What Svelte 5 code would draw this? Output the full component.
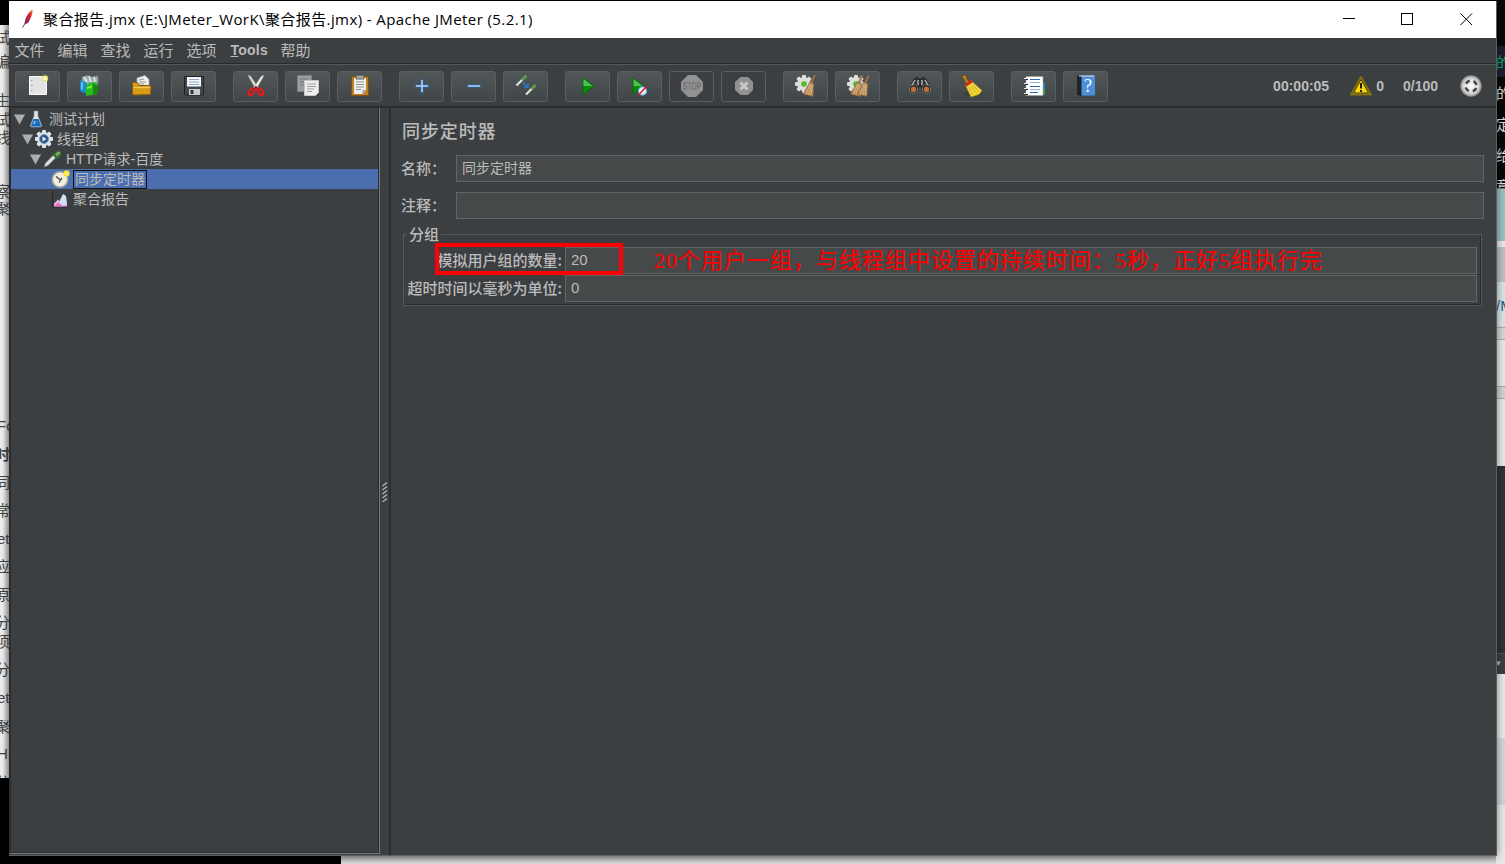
<script>
  const menus = ['文件', '编辑', '查找', '运行', '选项', 'Tools', '帮助'];
  const groups = [
    ['new', 'templates', 'open', 'save'],
    ['cut', 'copy', 'paste'],
    ['plus', 'minus', 'toggle'],
    ['start', 'startnp', 'stop', 'shutdown'],
    ['clear', 'clearall'],
    ['find', 'broom'],
    ['func', 'help']
  ];
  const tree = [
    { label: '测试计划', icon: 'flask', pad: 3, open: true },
    { label: '线程组', icon: 'gear', pad: 11, open: true },
    { label: 'HTTP请求-百度', icon: 'pipette', pad: 19, open: true },
    { label: '同步定时器', icon: 'clock', pad: 40, sel: true },
    { label: '聚合报告', icon: 'chart', pad: 40 }
  ];
  const leftText = [
    [29, '试'], [53, '编'], [92, '生'], [111, '试'], [129, '线'], [183, '察'], [200, '聚'],
    [417, 'Fo'], [446, '时', 1], [474, '同'], [502, '常'], [530, 'et'], [558, '应'], [586, '原'], [614, '分'],
    [633, '项'], [661, '分'], [689, 'et'], [718, '聚'], [745, 'HI'], [774, '分']
  ].map((r, i, a) => ({ gap: r[0] - (i ? a[i - 1][0] + 18 : 25), text: r[1], bold: r[2] }));
  const rightText = [['的', 1], ['的'], ['定'], ['给'], ['意']];
  const gearTeeth = [0, 45, 90, 135, 180, 225, 270, 315];
</script>

{#snippet gear(c)}
  {#each gearTeeth as a}
    <rect x="-2" y="-9" width="4" height="5" rx="1" fill={c} transform="rotate({a})" />
  {/each}
  <circle r="6.900" fill={c} />
{/snippet}

{#snippet whisk(x)}
  <g transform="translate({x} 0)">
    <path d="M18.500 1l1.500.6-3.500 8-1.500-.6z" fill="#b98c56" stroke="#6f4d28" stroke-width=".5" />
    <path d="M14.500 8l4 1.500-1 13-10-2.500z" fill="#b88c5c" stroke="#7d5a34" stroke-width=".6" />
    <path d="M14.500 10l-4 10.500M15.700 10.500l-2.500 10.500M17 11l-1.500 10" stroke="#e0bb8c" stroke-width=".8" fill="none" />
  </g>
{/snippet}

{#snippet icon(n)}
  <svg class="ic" viewBox="0 0 24 24" width="24" height="24">
    {#if n === 'new'}
      <path d="M3.500 2.500h17v18h-17z" fill="#e3e3e3" stroke="#fafafa" />
      <path d="M5 6.500h1.500M5 11.500h1.500M5 16.500h1.500" stroke="#999" />
      <circle cx="19" cy="4.500" r="3.200" fill="#efe570" opacity=".9" /><circle cx="19" cy="4.500" r="1.500" fill="#fffde0" />
    {:else if n === 'templates'}
      <path d="M4 3l5-1.500 5 1.500 6-1v8l-8 3-8-3z" fill="#9caeb5" stroke="#748186" stroke-width=".7" />
      <path d="M6 3l3 5M11 2l2 6M16 3l1 5" stroke="#e5eced" stroke-width="1.500" />
      <path d="M2 6l7 3v11l-7-3z" fill="#178bcb" /><path d="M4 8.500v7" stroke="#80d5f5" stroke-width="1.500" />
      <path d="M8 12l3-3 8-1v12l-11 2z" fill="#28bd19" /><path d="M15 9l5 4v6l-5 2.500z" fill="#148a12" />
      <path d="M9 13l5-1.500v2l-5 1.500z" fill="#74e95b" />
    {:else if n === 'open'}
      <path d="M7 4l8-2.500 4 4v9H7z" fill="#eeeeec" stroke="#aaa" stroke-width=".7" />
      <path d="M9 6l5-1M9 8h7M9 10h5" stroke="#999" />
      <path d="M2.500 9l1-.5h4l1.500 3h12l-.5 9-17 .5-1-1z" fill="#d99b17" stroke="#8c5d0b" />
      <path d="M4 13.500h16" stroke="#f5ca63" stroke-width="1.200" />
    {:else if n === 'save'}
      <path d="M2.500 2.500h19v18.500h-18l-1-1z" fill="#41464b" stroke="#1e2225" />
      <path d="M5 3h14v9.500H5z" fill="#f5f7fb" /><path d="M7 5.500h10M7 8h10M7 10.500h10" stroke="#8caac9" />
      <path d="M7 15h11v6H7z" fill="#c8cbcd" /><path d="M8.500 16h3v4h-3z" fill="#30353a" />
    {:else if n === 'cut'}
      <path d="M4 1.500L6.500 2l8.500 12.500-3 1z" fill="#dedfdf" stroke="#9ca0a0" stroke-width=".6" />
      <path d="M20 1.500L17.500 2 9 14.500l3 1z" fill="#f3f4f4" stroke="#9ca0a0" stroke-width=".6" />
      <ellipse cx="7.200" cy="18.200" rx="3.200" ry="2.400" fill="none" stroke="#dc1c20" stroke-width="2.300" transform="rotate(-45 7.200 18.200)" />
      <ellipse cx="16.800" cy="18.200" rx="3.200" ry="2.400" fill="none" stroke="#dc1c20" stroke-width="2.300" transform="rotate(45 16.800 18.200)" />
      <path d="M9 16l3-2.500 3 2.500" fill="none" stroke="#c01619" stroke-width="2.600" />
    {:else if n === 'copy'}
      <path d="M1.500 1.500h14v16h-14z" fill="#999d9e" stroke="#7c8081" />
      <path d="M4 5h8M4 8h4M4 11h4" stroke="#777" />
      <path d="M8.500 6.500h14v12l-3 3h-11z" fill="#eeeeed" stroke="#c4c6c6" /><path d="M11 10h9M11 12.500h9M11 15h7M11 17.500h5" stroke="#9b9d9e" />
    {:else if n === 'paste'}
      <path d="M3.500 2.500h17v19h-17z" fill="#c07c20" stroke="#805013" />
      <path d="M6 4h12v12l-3 4H6z" fill="#eeeeed" /><path d="M15 20v-3.500h3" fill="#bbb" stroke="#999" />
      <path d="M8 1.500h8v3.500H8z" fill="#a2a99f" stroke="#666" /><path d="M8 8h8M8 10.500h8M8 13h8M8 15.500h5" stroke="#949697" />
    {:else if n === 'plus'}
      <path d="M12 5v14M5 12h14" stroke="#2a66ac" stroke-width="3" /><path d="M12 6v12M6 12h12" stroke="#b5d6f8" stroke-width="1.500" />
    {:else if n === 'minus'}
      <path d="M5 12h14" stroke="#2a66ac" stroke-width="3" /><path d="M6 12h12" stroke="#b5d6f8" stroke-width="1.500" />
    {:else if n === 'toggle'}
      <path d="M2.500 11.500l7-7" stroke="#e0e4df" stroke-width="2.200" /><path d="M8 6l4.500-4.500" stroke="#5e9a48" stroke-width="3" />
      <path d="M12 20.500l7-7" stroke="#e0e4df" stroke-width="2.200" /><path d="M17.500 15l4-4" stroke="#5e9a48" stroke-width="3" />
      <path d="M8.500 8.500l5 4.500M14 9.500v4H10" fill="none" stroke="#2878d0" stroke-width="1.500" />
    {:else if n === 'start'}
      <path d="M7 3.500L18 12 7 20.500z" fill="#078d0c" stroke="#16610e" /><path d="M7.500 5l9 7h-9z" fill="#4cc14f" />
    {:else if n === 'startnp'}
      <path d="M5 3.500L16 12 5 20.500z" fill="#078d0c" stroke="#16610e" /><path d="M5.500 5l9 7h-9z" fill="#4cc14f" />
      <circle cx="14.500" cy="17" r="4.300" fill="#dfedf9" stroke="#4f91cb" /><path d="M10.500 21l8-8.500" stroke="#cf1e23" stroke-width="1.500" />
    {:else if n === 'stop'}
      <path d="M8 1h8l7 7v8l-7 7H8l-7-7V8z" fill="#929292" />
      <text x="12" y="15.600" text-anchor="middle" textLength="19" lengthAdjust="spacingAndGlyphs" font-size="10" font-weight="bold" font-family="Liberation Sans" fill="#757575">STOP</text>
    {:else if n === 'shutdown'}
      <path d="M8.500 3H16l5 5v8l-5 5H8.500L3 16V8z" fill="#929292" /><path d="M8.500 8.500l7 7M15.500 8.500l-7 7" stroke="#c8c8c8" stroke-width="3" />
    {:else if n === 'clear'}
      <g transform="translate(10 10)">{@render gear('#dededc')}<circle r="2.800" fill="#55b92b" /></g>{@render whisk(1.500)}
    {:else if n === 'clearall'}
      <g transform="translate(10 10)">{@render gear('#dededc')}<circle r="2.800" fill="#55b92b" /></g>{@render whisk(-3)}{@render whisk(3.500)}
    {:else if n === 'find'}
      <path d="M6 5l3-1.500 2 1.500h2l2-1.500L18 5l5 10-3 3.500h-4l-3-6h-2l-3 6H4L1 15z" fill="#303233" stroke="#151515" stroke-width=".7" />
      <path d="M7 6L3.500 12M17 6l3.500 6M10 6v5M14 6v5" stroke="#b2b7b9" stroke-width="1.400" />
      <circle cx="5.500" cy="15" r="4.100" fill="#1c1c1c" stroke="#888" stroke-width=".8" /><circle cx="5.500" cy="15.300" r="2.800" fill="#c0713f" />
      <circle cx="18.500" cy="15" r="4.100" fill="#1c1c1c" stroke="#888" stroke-width=".8" /><circle cx="18.500" cy="15.300" r="2.800" fill="#c0713f" />
    {:else if n === 'broom'}
      <ellipse cx="13" cy="20" rx="10" ry="2.500" fill="#333" opacity=".4" />
      <path d="M2 3.500l1-2 2.500-.5 1.500 2-.5 1.500 3 4-3 2-2.500-5.500z" fill="#bf8221" stroke="#734810" stroke-width=".8" />
      <path d="M5.500 11.500L12 7.500l10 9-3 4-8 2.500z" fill="#f4d83d" stroke="#a88b13" stroke-width=".7" />
      <path d="M5.500 11.500L12 7" stroke="#d3281d" stroke-width="2.800" /><path d="M9 13l4 8M11 12l6 8M13 11l6 7" stroke="#bd9e17" stroke-width=".7" />
    {:else if n === 'func'}
      <path d="M17 9h6v6h-6z" fill="#2283cc" /><path d="M17 15h6v5.500h-6z" fill="#36a72d" />
      <path d="M4 2.500h17v19H4z" fill="#fff" stroke="#999" stroke-width=".5" /><path d="M8 5.500h10M8 12.500h10M8 18.500h8" stroke="#2f68b5" stroke-width="1.200" /><path d="M8 8.500h10M8 15.500h10" stroke="#8eafd6" />
      <path d="M3.500 5h2.500M3.500 10h2.500M3.500 15h2.500M3.500 20h2.500" stroke="#202426" stroke-width="2.200" /><path d="M2 4.500h4M2 9.500h4M2 14.500h4M2 19.500h4" stroke="#eee" />
    {:else if n === 'help'}
      <path d="M4 1.500h17v20H4z" fill="#4c90db" /><path d="M3 1.500h4.500v21L3 21z" fill="#202326" /><path d="M5 2h15" stroke="#dbe1e8" />
      <text x="14" y="17.500" text-anchor="middle" font-size="18" font-family="Liberation Serif" fill="#fff">?</text>
    {/if}
  </svg>
{/snippet}

<div class="desktop">
  <div class="left">
    {#each leftText as r}
      <div class="lt" class:bold={r.bold} class:latin={r.text.length > 1} style="margin-top:{r.gap}px">{r.text}</div>
    {/each}
  </div>
  <div class="bottom"></div>
  <div class="right">
    <div class="code">
      {#each rightText as r}<div class:green={r[1]}>{r[0]}</div>{/each}
    </div>
    <div class="r1"></div><div class="r2"></div><div class="r3">/M</div><div class="r4"></div>
    <div class="r5"></div><div class="r6"></div><div class="r7"></div><div class="r8">▾</div><div class="r9"></div><div class="r10"></div>
  </div>

  <div class="window">
    <header>
      <svg class="feather" width="14" height="20" viewBox="0 0 14 20">
        <defs><linearGradient id="f" x1="1" y1="0" x2="0" y2="1"><stop offset="0" stop-color="#f49b23" /><stop offset=".35" stop-color="#d72638" /><stop offset="1" stop-color="#74235f" /></linearGradient></defs>
        <path d="M11.500 0.500C12 4 10 9 7 14l-3.500 1.500C3.500 10 7 3 11.500.5z" fill="url(#f)" /><path d="M4 14.500l-2.500 4" stroke="#713064" />
      </svg>
      <h1>聚合报告.jmx (E:\JMeter_WorK\聚合报告.jmx) - Apache JMeter (5.2.1)</h1>
      <svg class="wc" width="130" height="14" viewBox="0 0 130 14" fill="none" stroke="#000">
        <path d="M0 6.500h12M58.500 1.500h11v11h-11z" shape-rendering="crispEdges" /><path d="M117.500 1.500l11.500 11.500M129 1.500L117.500 13" />
      </svg>
    </header>
    <nav>
      {#each menus as m}<span class:tools={m === 'Tools'}>{#if m === 'Tools'}<u>T</u>ools{:else}{m}{/if}</span>{/each}
    </nav>
    <div class="toolbar">
      {#each groups as g}
        <div class="group">
          {#each g as n}<button class:off={n === 'stop' || n === 'shutdown'} aria-label={n}>{@render icon(n)}</button>{/each}
        </div>
      {/each}
      <div class="status">
        <b class="time">00:00:05</b>
        <svg width="22" height="20" viewBox="0 0 22 20"><path d="M11 1L21 18.500H1z" fill="#f5cf0d" stroke="#81700c" stroke-width="1.800" stroke-linejoin="round" /><path d="M11 3.500L18.500 17h-15z" fill="#ffd800" stroke="#222" stroke-width=".9" /><path d="M11 7v5.500M11 14v2" stroke="#1e1b00" stroke-width="2" /></svg>
        <b class="warn">0</b><b class="threads">0/100</b>
        <svg width="22" height="22" viewBox="0 0 22 22"><defs><radialGradient id="g"><stop offset="0" stop-color="#fff" /><stop offset=".7" stop-color="#d8d8d8" /><stop offset="1" stop-color="#8a8a8a" /></radialGradient></defs><circle cx="11" cy="11" r="10.700" fill="url(#g)" /><circle cx="11" cy="11" r="5.500" fill="none" stroke="#454545" stroke-width="2.600" stroke-dasharray="4.640 4" stroke-dashoffset="-2" /></svg>
      </div>
    </div>
    <main>
      <aside>
        {#each tree as t}
          <div class="node" class:sel={t.sel} style="padding-left:{t.pad}px">
            {#if t.open}<svg class="arrow" width="11" height="11" viewBox="0 0 11 11"><path d="M0 .5h11L5.500 10.500z" fill="#adadad" /></svg>{/if}
            <svg class="ni {t.icon}" width="20" height="20" viewBox="0 0 20 20">
              {#if t.icon === 'flask'}
                <path d="M8 2h4v5l3.500 9c.5 1.500-.5 2-1.500 2H6c-1 0-2-.5-1.500-2L8 7z" fill="#dce7ed" stroke="#8597a0" stroke-width=".7" /><path d="M7.500 10h5l2.500 6.500c0 1-1 1-1 1H6s-1 0-1-1z" fill="#1d69bd" /><path d="M7.500 15l2-3" stroke="#a9d5f8" stroke-width="1.300" />
              {:else if t.icon === 'gear'}
                <g transform="translate(10 10)">{@render gear('#dce3ea')}<circle r="4.500" fill="#2b5681" stroke="#779cbe" /><path d="M-1.500-2.500L2.500 0l-4 2.500z" fill="#e5f4ff" /></g>
              {:else if t.icon === 'pipette'}
                <path d="M1 18l1.500-4 8-8 2.500 2.500-8 8z" fill="#dfe3e0" stroke="#737a74" stroke-width=".7" />
                <path d="M9.500 4.500l5 5" stroke="#37612f" stroke-width="2" /><path d="M11.500 5.500l3-3c1.500-1.200 4.500 1 3 3l-3.200 3z" fill="#5f9b4b" stroke="#3f7433" stroke-width="1.300" /><path d="M13 5.500l3-2.500" stroke="#a7d490" />
              {:else if t.icon === 'clock'}
                <circle cx="9" cy="10.500" r="7.700" fill="#f1efdf" stroke="#a3a5a1" stroke-width="1.600" /><path d="M5 7.500l4.500 3.500 1.500-2M9.500 11l-1.500 2.500" fill="none" stroke="#4c4a32" stroke-width="1.300" /><circle cx="15.500" cy="4.500" r="3.200" fill="#ffdf30" /><circle cx="15.500" cy="4.500" r="1.300" fill="#fff6a4" />
              {:else}
                <path d="M1.500 2v16H16" fill="none" stroke="#26282a" /><path d="M3 17.500v-3l4-4 3 3 2-2 4 3v3z" fill="#f1acd9" /><path d="M8 13l4-8 3 2 1 7.500-4 2z" fill="#cfe3f8" /><path d="M3 17.500l4-4 5 4z" fill="#e070c0" />
              {/if}
            </svg>
            <span class="label">{t.label}</span>
          </div>
        {/each}
      </aside>
      <div class="split"><svg width="6" height="20" viewBox="0 0 6 20"><path d="M.5 4L5 .5M.5 8L5 4.500M.5 12L5 8.500M.5 16L5 12.500M.5 20L5 16.500" stroke="#b8b8b8" stroke-width="1.200" /></svg></div>
      <section>
        <h2>同步定时器</h2>
        <div class="field first"><span class="fl">名称：</span><div class="input">同步定时器</div></div>
        <div class="field"><span class="fl">注释：</span><div class="input"></div></div>
        <fieldset>
          <legend>分组</legend>
          <div class="row"><span class="rl">模拟用户组的数量:</span><div class="input num">20<span class="note">20个用户一组，与线程组中设置的持续时间：5秒，正好5组执行完</span></div><i class="redbox"></i></div>
          <div class="row"><span class="rl">超时时间以毫秒为单位:</span><div class="input num">0</div></div>
        </fieldset>
      </section>
    </main>
  </div>
</div>

<style>
  :global(body) { background: #000; overflow: hidden; }
  * { box-sizing: border-box; }
  .desktop { position: relative; width: 1505px; height: 864px; overflow: hidden; background: #000; font-family: "Liberation Sans", "Noto Sans CJK SC", sans-serif; color: #bbb; }
  .left { position: absolute; left: 0; top: 25px; width: 9px; height: 753px; overflow: hidden; background: linear-gradient(90deg, #eee 30%, #b4b4b4); display: flex; flex-direction: column; color: #444; font-size: 15px; line-height: 18px; }
  .lt { height: 18px; flex: none; white-space: nowrap; text-indent: -5px; }
  .latin { text-indent: -3px; }
  .bold { font-weight: bold; }
  .bottom { position: absolute; left: 341px; top: 855px; width: 1164px; height: 9px; background: linear-gradient(#999, #ddd); }
  .right { position: absolute; left: 1496px; top: 0; width: 9px; height: 864px; background: #e8e8e8; display: flex; flex-direction: column; overflow: hidden; }
  .right > * { flex: none; }
  .code { height: 188px; padding-top: 46px; background: #080808; color: #ddd; font-size: 15px; line-height: 33px; white-space: nowrap; overflow: hidden; }
  .code div { height: 31px; overflow: hidden; }
  .code .green { color: #16a36d; background: #1c2030; }
  .r1 { height: 53px; border-top: 1px solid #6b8283; background: #9ac2c2; margin-bottom: 6px; }
  .r2 { height: 35px; background: #b8c1c1; }
  .r3 { height: 45px; padding-top: 15px; line-height: 18px; background: #d9e4e4; color: #1a6288; font-size: 15px; }
  .r4 { height: 13px; background: #d6d6d6; border: solid #aaa; border-width: 1px 0; }
  .r5 { height: 46px; }
  .r6 { height: 13px; background: #d2d2d2; border: solid #aaa; border-width: 1px 0; margin-bottom: 67px; }
  .r7 { height: 187px; background: #303234; }
  .r8 { height: 21px; background: #3c3f41; border-top: 1px solid #555; font-size: 9px; line-height: 18px; }
  .r9 { height: 64px; }
  .r10 { height: 67px; background: #d3d3da; }
  .window { position: absolute; left: 9px; top: 1px; width: 1488px; height: 855px; background: #3c3f41; border: solid #5d5f60; border-width: 0 1px 1px 0; box-shadow: 0 0 8px rgba(0,0,0,.45); display: flex; flex-direction: column; }
  header { height: 37px; flex: none; background: #fff; color: #000; display: flex; align-items: center; padding-left: 12px; }
  .feather { margin-bottom: 2px; }
  h1 { font: 15px/20px "Open Sans", "Noto Sans CJK SC", sans-serif; letter-spacing: .41px; margin: 0 0 2px 8px; white-space: nowrap; }
  .wc { margin-left: auto; margin-right: 23px; margin-bottom: 1px; }
  nav { height: 26px; flex: none; display: flex; gap: 13px; padding-left: 5.500px; font: 15px/23px "Noto Sans CJK SC", sans-serif; white-space: nowrap; border-bottom: 1px solid #27292a; }
  .tools { font: bold 14px/24px "Liberation Sans", sans-serif; width: 38px; margin: 0 -1px 0 1px; letter-spacing: .2px; }
  .toolbar { height: 44px; flex: none; border-top: 1px solid #55585a; border-bottom: 2px solid #292c2d; display: flex; gap: 17px; padding: 6px 14px 0 6px; }
  .group { display: flex; gap: 7px; }
  button { width: 45px; height: 31px; padding: 0 0 1px 0; border: 1px solid #5b5e60; border-radius: 3px; background: linear-gradient(#515658, #414648); display: flex; align-items: center; justify-content: center; }
  button.off { background: #3c3f41; }
  .ic { display: block; }
  .status { margin-left: auto; height: 29px; display: flex; align-items: center; font-size: 14px; white-space: nowrap; }
  .time { margin-right: 21px; }
  .warn { margin: 0 19px 0 4px; }
  .threads { margin-right: 22px; }
  main { flex: 1; display: flex; min-height: 0; }
  aside { width: 371px; height: 746px; border: solid #777b7c; border-width: 0 1px 1px 0; border-left: 2px solid #2b2d2e; padding: 1px 1px 0 0; box-shadow: inset -1px -1px #292b2c; }
  .node { height: 20px; display: flex; align-items: center; white-space: nowrap; }
  .arrow { flex: none; }
  .ni { flex: none; }
  .flask { margin: 0 3px 0 1px; }
  .gear { margin: 0 3px 0 1px; }
  .pipette { margin: 0 3px 0 2px; }
  .clock, .chart { margin-right: 2px; }
  .sel { background: #4b6eaf; }
  .label { height: 19px; border: 1px solid transparent; margin-left: -1px; font: 14px/17px "Liberation Sans", "Noto Sans CJK SC", sans-serif; }
  .sel .label { border-color: #111; padding: 0 1px; margin-left: 0; }
  .split { width: 11px; display: flex; align-items: center; padding: 20px 0 0 2px; border-right: 2px solid #2a2c2d; }
  section { flex: 1; padding: 11px 12px 0 10px; min-width: 0; }
  h2 { margin: 0 0 0 1px; font: 500 18px/22px "Noto Sans CJK SC", sans-serif; letter-spacing: .9px; }
  .field { display: flex; height: 27px; margin-top: 10px; font: 500 15px/25px "Noto Sans CJK SC", sans-serif; }
  .field.first { margin-top: 14px; }
  .fl { width: 55px; flex: none; white-space: nowrap; }
  .input { flex: 1; height: 27px; background: #45494a; border: 1px solid #646464; padding-left: 5px; font: 14px/23px "Noto Sans CJK SC", sans-serif; }
  fieldset { margin: 5px 2px 0 2px; border: 1px solid #555859; box-shadow: inset -1px -1px #2b2d2e; padding: 2px 4px 2px 3px; min-width: 0; height: 82px; }
  legend { padding: 0 2px; font: 500 15px/20px "Noto Sans CJK SC", sans-serif; }
  .row { position: relative; display: flex; height: 28px; align-items: center; }
  .rl { width: 155px; margin-right: 3px; text-align: right; font: 500 15px/25px "Noto Sans CJK SC", sans-serif; height: 27px; white-space: nowrap; }
  .num { font: 15px/24px "Liberation Sans", sans-serif; position: relative; }
  .note { position: absolute; left: 88px; top: 0; color: #f00; font: 22px/25px "Liberation Serif", "Noto Sans CJK SC", serif; white-space: nowrap; letter-spacing: 1px; -webkit-text-stroke: .2px #f00; }
  .redbox { position: absolute; left: 28px; top: -3px; width: 188px; height: 32px; border: 4px solid #f00; }
</style>
